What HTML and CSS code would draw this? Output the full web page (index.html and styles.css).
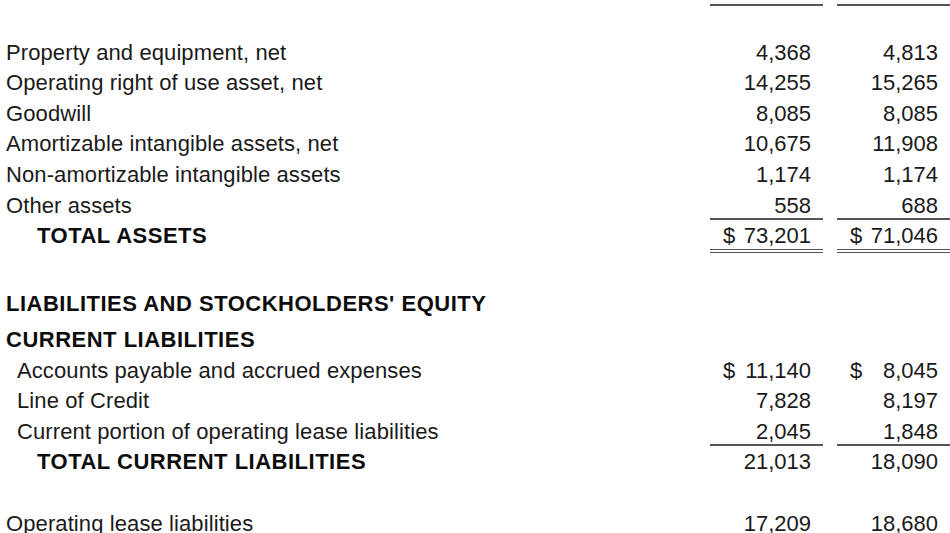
FILE: index.html
```html
<!DOCTYPE html>
<html>
<head>
<meta charset="utf-8">
<link rel="stylesheet" href="styles.css">
</head>
<body>
<div class="sheet">
  <div class="row head">
    <div class="label"></div>
    <div class="val rule-b"></div>
    <div class="val rule-b"></div>
  </div>
  <div class="row"><div class="label"></div><div class="val"></div><div class="val"></div></div>
  <div class="row"><div class="label">Property and equipment, net</div><div class="val"><span></span><span>4,368</span></div><div class="val"><span></span><span>4,813</span></div></div>
  <div class="row"><div class="label">Operating right of use asset, net</div><div class="val"><span></span><span>14,255</span></div><div class="val"><span></span><span>15,265</span></div></div>
  <div class="row"><div class="label">Goodwill</div><div class="val"><span></span><span>8,085</span></div><div class="val"><span></span><span>8,085</span></div></div>
  <div class="row"><div class="label">Amortizable intangible assets, net</div><div class="val"><span></span><span>10,675</span></div><div class="val"><span></span><span>11,908</span></div></div>
  <div class="row"><div class="label">Non-amortizable intangible assets</div><div class="val"><span></span><span>1,174</span></div><div class="val"><span></span><span>1,174</span></div></div>
  <div class="row"><div class="label">Other assets</div><div class="val rule-b"><span></span><span>558</span></div><div class="val rule-b"><span></span><span>688</span></div></div>
  <div class="row"><div class="label bold total">TOTAL ASSETS</div><div class="val dbl"><span>$</span><span>73,201</span></div><div class="val dbl"><span>$</span><span>71,046</span></div></div>
  <div class="row gap"><div class="label"></div><div class="val"></div><div class="val"></div></div>
  <div class="row sec1"><div class="label bold">LIABILITIES AND STOCKHOLDERS' EQUITY</div><div class="val"></div><div class="val"></div></div>
  <div class="row sec2"><div class="label bold">CURRENT LIABILITIES</div><div class="val"></div><div class="val"></div></div>
  <div class="row"><div class="label indent">Accounts payable and accrued expenses</div><div class="val"><span>$</span><span>11,140</span></div><div class="val"><span>$</span><span>8,045</span></div></div>
  <div class="row"><div class="label indent">Line of Credit</div><div class="val"><span></span><span>7,828</span></div><div class="val"><span></span><span>8,197</span></div></div>
  <div class="row"><div class="label indent">Current portion of operating lease liabilities</div><div class="val rule-b"><span></span><span>2,045</span></div><div class="val rule-b"><span></span><span>1,848</span></div></div>
  <div class="row"><div class="label bold total">TOTAL CURRENT LIABILITIES</div><div class="val"><span></span><span>21,013</span></div><div class="val"><span></span><span>18,090</span></div></div>
  <div class="row"><div class="label"></div><div class="val"></div><div class="val"></div></div>
  <div class="row"><div class="label">Operating lease liabilities</div><div class="val"><span></span><span>17,209</span></div><div class="val"><span></span><span>18,680</span></div></div>
</div>
</body>
</html>
```

FILE: styles.css
```css
html, body {
  margin: 0;
  padding: 0;
  background: #ffffff;
}
body {
  font-family: "Liberation Sans", Arial, sans-serif;
  font-size: 22px;
  color: #1a1a1a;
  overflow: hidden;
}
.sheet {
  width: 950px;
}
.row {
  display: grid;
  grid-template-columns: 1fr 113px 113px;
  column-gap: 14px;
}
.row > div {
  box-sizing: content-box;
  padding-top: 6px;
  line-height: 24.6px;
  min-height: 24.6px;
}
.row.head > div {
  padding-top: 0;
  min-height: 4px;
  height: 4px;
  line-height: 4px;
}
.row.gap > div {
  min-height: 24.4px;
  height: 24.4px;
}
.row.sec1 > div {
  padding-top: 8px;
  min-height: 26px;
  line-height: 26px;
}
.row.sec2 > div {
  padding-top: 10px;
  min-height: 25.4px;
  line-height: 25.4px;
}
.label {
  padding-left: 6px;
  white-space: nowrap;
  letter-spacing: 0.1px;
}
.label.indent {
  padding-left: 17px;
}
.label.bold {
  font-weight: bold;
  letter-spacing: 0.5px;
  color: #0d0d0d;
}
.label.total {
  padding-left: 37px;
}
.val {
  display: flex;
  justify-content: space-between;
  padding: 0 12px 0 13px;
  white-space: nowrap;
}
.rule-b {
  border-bottom: 2px solid #555;
  margin-bottom: -2px;
}
.dbl {
  border-bottom: 4px double #555;
}
```
